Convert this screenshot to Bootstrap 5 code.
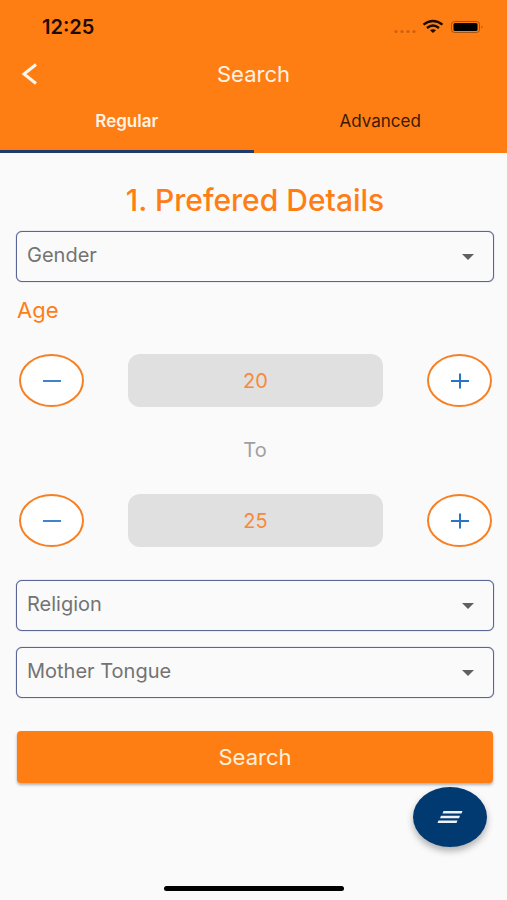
<!DOCTYPE html>
<html lang="en">
<head>
<meta charset="utf-8">
<meta name="viewport" content="width=device-width, initial-scale=1">
<title>Search</title>
<link href="https://cdn.jsdelivr.net/npm/bootstrap@5.3.0/dist/css/bootstrap.min.css" rel="stylesheet">
<style>
:root { --brand: #ff7e14; --navy: #003a70; --outline: #5a6596; }
body { background: #fafafa; font-family: Inter, "Liberation Sans", sans-serif; color: #737373; }
.app-head { background: var(--brand); }
.status-line { height: 54px; padding: 0 23px 0 42px; color: #1c0b00; font-size: 20px; }
.title-line { height: 40px; padding: 0 20px; }
.title-line h1 { font-size: 22px; line-height: 24px; color: #fff3e6; }
.side-slot { width: 24px; }
.tab-link { height: 59px; padding-bottom: 1px; border-bottom: 3px solid transparent; font-size: 17px; color: #3a1a00; }
.tab-link.active { border-color: #1f3a6b; color: #fff3e6; }
.form-area { padding: 31px 13px 0 16px; }
.section-title { font-size: 30px; line-height: 32px; color: var(--brand); margin-bottom: 15px; }
.picker { height: 51px; padding: 0 40px 4px 10px; border: 1px solid var(--outline); border-radius: 6px; box-shadow: 0 0 1px var(--outline); font-size: 20px; color: #737373; background-color: #fafafa; background-size: 12px 6px; background-position: right 19px center;
  background-image: url("data:image/svg+xml,%3Csvg xmlns='http://www.w3.org/2000/svg' viewBox='0 0 12 6'%3E%3Cpath d='M0 0h12L6 6z' fill='%23606060'/%3E%3C/svg%3E"); }
.age-label { font-size: 22px; line-height: 24px; color: var(--brand); margin: 16px 0 32px 1px; }
.stepper { gap: 44px; padding: 0 2px 0 3px; }
.step-btn { width: 65px; height: 53px; border: 2px solid #f58025; border-radius: 50%; background: #fff; }
.age-value { height: 53px; min-width: 0; border: 0; border-radius: 12px; background: #e0e0e0; color: #f58a3c; font-size: 20px; }
.to-label { font-size: 20px; line-height: 27px; margin: 30px 0; color: #a0a0a0; }
.more-fields { margin-top: 33px; }
.search-btn { height: 52px; margin: 33px 1px 0; width: calc(100% - 2px); border: 0; border-radius: 4px; background: var(--brand); color: #fff0dc; font-size: 22px; box-shadow: 0 2px 3px rgba(0,0,0,.3); }
.fab { right: 20px; bottom: 53px; width: 74px; height: 60px; border: 0; border-radius: 50%; background: var(--navy); box-shadow: 0 4px 7px rgba(0,0,0,.3); }
.home-bar { width: 180px; height: 5px; border-radius: 3px; background: #000; margin-bottom: 9px; }
</style>
<script defer src="https://cdn.jsdelivr.net/npm/bootstrap@5.3.0/dist/js/bootstrap.bundle.min.js"></script>
</head>
<body>
<div class="min-vh-100 d-flex flex-column">
  <header class="app-head">
    <div class="status-line d-flex align-items-center justify-content-between">
      <span class="fw-semibold">12:25</span>
      <svg width="92" height="16" viewBox="0 0 92 16" aria-hidden="true">
        <g fill="#c9630f"><circle cx="4" cy="12.500" r="1.600"/><circle cx="10" cy="12.500" r="1.600"/><circle cx="16" cy="12.500" r="1.600"/><circle cx="22" cy="12.500" r="1.600"/></g>
        <g fill="none" stroke="#1c0b00" stroke-width="2.400"><path d="M31.500 5.600Q41 -1.800 50.500 5.600"/><path d="M35 9Q41 4 47 9"/></g>
        <path d="M38 11.300Q41 9 44 11.300L41 14z" fill="#1c0b00"/>
        <rect x="59.500" y="2.500" width="28" height="11" rx="3" fill="none" stroke="#a3520f"/>
        <rect x="61.500" y="4" width="24" height="8" rx="1.500" fill="#000"/>
        <path d="M89.500 6.500q2 1.500 0 3z" fill="#a3520f"/>
      </svg>
    </div>
    <div class="title-line d-flex align-items-center justify-content-between">
      <button type="button" class="btn p-0 border-0 side-slot d-flex" aria-label="Back">
        <svg width="20" height="22" viewBox="0 0 20 22" fill="none" stroke="#fff6ec" stroke-width="3"><path d="M16 1.500L4 11l12 9.500"/></svg>
      </button>
      <h1 class="m-0 fw-normal">Search</h1>
      <span class="side-slot"></span>
    </div>
    <nav class="d-flex" aria-label="Search type">
      <a href="#regular" class="tab-link active fw-semibold text-decoration-none d-flex flex-fill w-50 align-items-center justify-content-center" aria-current="page">Regular</a>
      <a href="#advanced" class="tab-link text-decoration-none d-flex flex-fill w-50 align-items-center justify-content-center">Advanced</a>
    </nav>
  </header>
  <main>
    <form class="form-area">
      <h2 class="section-title text-center fw-medium">1. Prefered Details</h2>
      <select class="form-select picker" aria-label="Gender"><option>Gender</option></select>
      <div class="age-label">Age</div>
      <div class="stepper d-flex">
        <button type="button" class="step-btn flex-shrink-0 d-flex align-items-center justify-content-center p-0" aria-label="Decrease minimum age"><svg width="20" height="16" stroke="#3f83cc" stroke-width="2"><path d="M1 8h18"/></svg></button>
        <input type="text" class="age-value flex-fill w-50 text-center" value="20" inputmode="numeric" aria-label="Minimum age">
        <button type="button" class="step-btn flex-shrink-0 d-flex align-items-center justify-content-center p-0" aria-label="Increase minimum age"><svg width="20" height="16" stroke="#2b74c4" stroke-width="2"><path d="M1 8h18M10 .5v15"/></svg></button>
      </div>
      <div class="to-label text-center">To</div>
      <div class="stepper d-flex">
        <button type="button" class="step-btn flex-shrink-0 d-flex align-items-center justify-content-center p-0" aria-label="Decrease maximum age"><svg width="20" height="16" stroke="#3f83cc" stroke-width="2"><path d="M1 8h18"/></svg></button>
        <input type="text" class="age-value flex-fill w-50 text-center" value="25" inputmode="numeric" aria-label="Maximum age">
        <button type="button" class="step-btn flex-shrink-0 d-flex align-items-center justify-content-center p-0" aria-label="Increase maximum age"><svg width="20" height="16" stroke="#2b74c4" stroke-width="2"><path d="M1 8h18M10 .5v15"/></svg></button>
      </div>
      <div class="more-fields d-grid gap-3">
        <select class="form-select picker" aria-label="Religion"><option>Religion</option></select>
        <select class="form-select picker" aria-label="Mother Tongue"><option>Mother Tongue</option></select>
      </div>
      <button type="submit" class="search-btn d-block">Search</button>
    </form>
  </main>
  <div class="home-bar mx-auto mt-auto"></div>
</div>
<button type="button" class="fab position-fixed d-flex align-items-center justify-content-center p-0" aria-label="Menu">
  <svg width="26" height="14" viewBox="0 0 26 14" fill="#eef1fa"><path d="M6.500 1h19l-1 2.500h-19zM4 5.700h19l-1 2.500H3zM1.500 10.400h19l-1 2.500h-19z"/></svg>
</button>
</body>
</html>
